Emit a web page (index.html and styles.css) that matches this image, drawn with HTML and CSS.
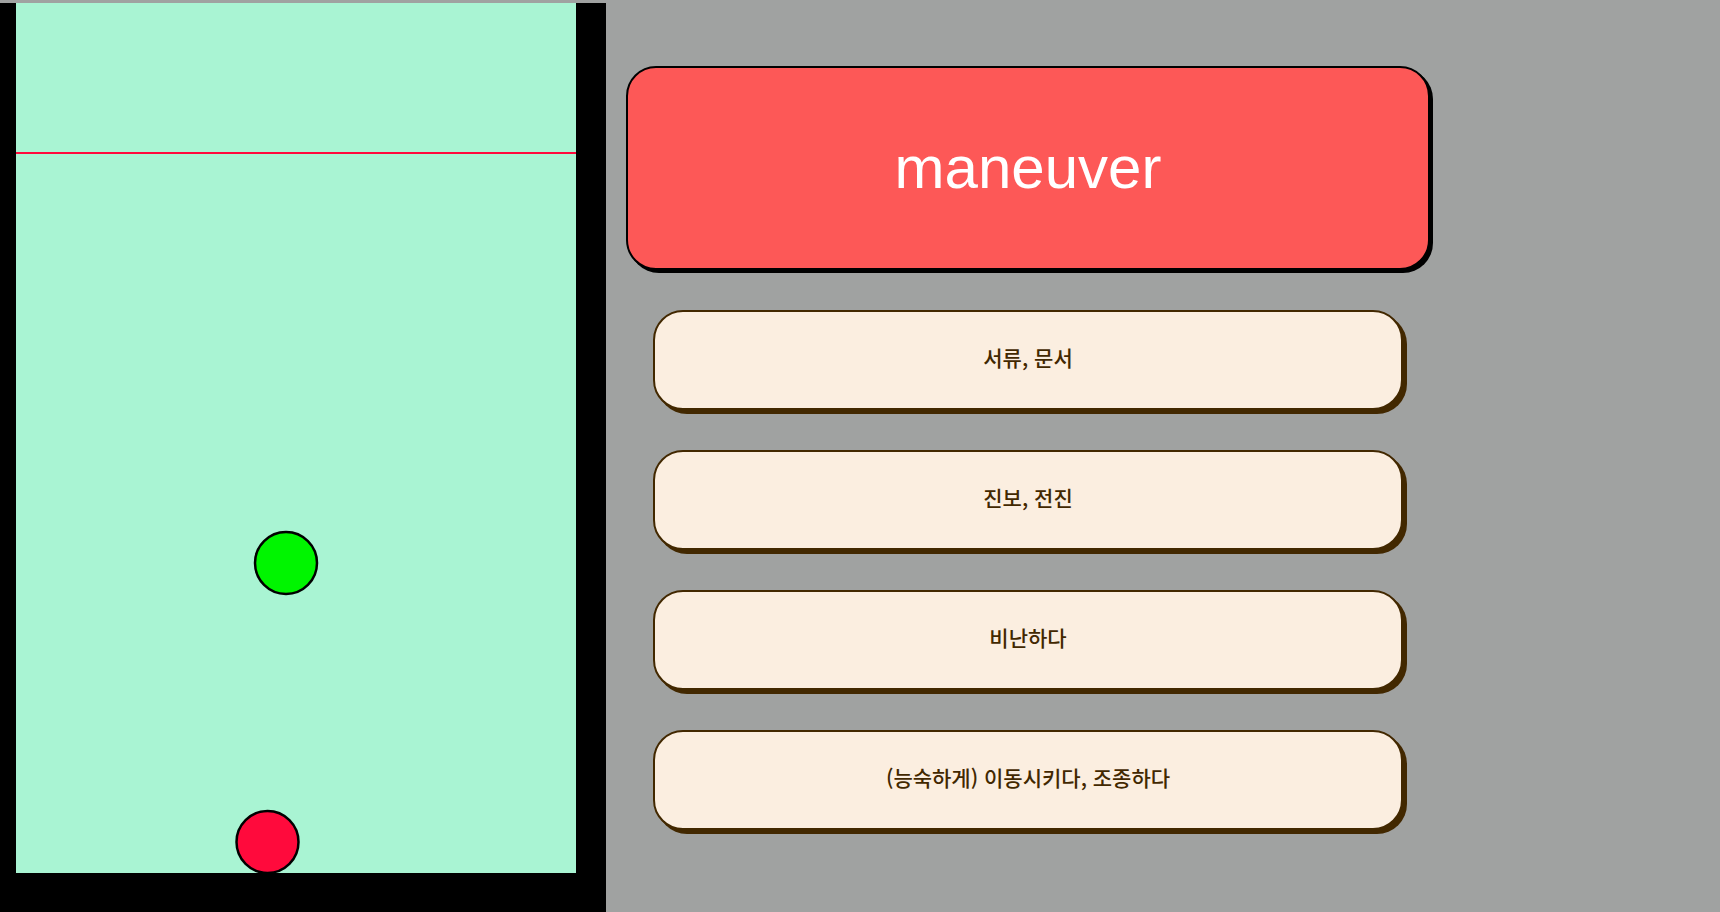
FILE: index.html
```
<!DOCTYPE html>
<html lang="ko">
<head>
<meta charset="utf-8">
<title>maneuver</title>
<link rel="stylesheet" href="styles.css">
</head>
<body>
<main class="game">
  <svg class="board" viewBox="0 0 606 909" aria-hidden="true">
    <rect width="606" height="909" fill="#000"/>
    <rect x="16" width="560" height="870" fill="#a9f4d3"/>
    <rect x="16" y="149" width="560" height="2" fill="#ff0a3c"/>
    <circle cx="286" cy="560" r="31" fill="#00f500" stroke="#000" stroke-width="2.5"/>
    <circle cx="267.5" cy="839" r="31" fill="#ff0a3c" stroke="#000" stroke-width="2.5"/>
  </svg>
  <section class="quiz">
    <h1 class="word">maneuver</h1>
    <div class="answers">
      <button class="answer" type="button">서류, 문서</button>
      <button class="answer" type="button">진보, 전진</button>
      <button class="answer" type="button">비난하다</button>
      <button class="answer" type="button">(능숙하게) 이동시키다, 조종하다</button>
    </div>
  </section>
</main>
</body>
</html>
```
FILE: styles.css
```
* {
  box-sizing: border-box;
}

body {
  margin: 0;
  background: #a0a2a1;
  font-family: "Liberation Sans", "Noto Sans CJK KR", sans-serif;
}

.game {
  display: grid;
  grid-template-columns: minmax(0, 606fr) minmax(0, 1114fr);
  align-items: start;
  padding-top: 3px;
}

.board {
  display: block;
  width: 100%;
}

.quiz {
  max-width: 824px;
  padding: 63px 0 0 20px;
}

.word {
  display: flex;
  align-items: center;
  justify-content: center;
  min-height: 204px;
  margin: 0;
  padding-bottom: 2px;
  border: 2px solid #000;
  border-radius: 30px;
  background: #fd5857;
  box-shadow: 3px 3px 0 #000;
  color: #fff;
  font-size: 60px;
  font-weight: 400;
}

.answers {
  display: grid;
  gap: 40px;
  padding: 40px 27px;
}

.answer {
  min-height: 100px;
  padding: 0 20px 6px;
  border: 2px solid #422800;
  border-radius: 30px;
  background: #fbeee0;
  box-shadow: 4px 4px 0 #422800;
  color: #422800;
  font-family: "Noto Sans CJK KR", sans-serif;
  font-size: 21px;
  font-weight: 500;
  line-height: 24px;
  cursor: pointer;
}
```
